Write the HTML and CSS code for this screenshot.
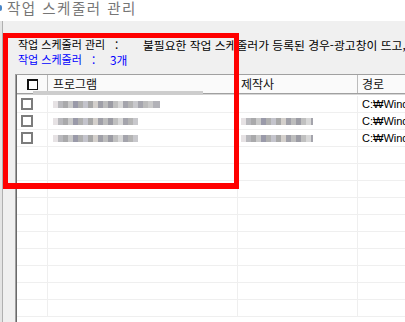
FILE: index.html
```html
<!DOCTYPE html>
<html lang="ko">
<head>
<meta charset="utf-8">
<link rel="stylesheet" href="styles.css">
</head>
<body>
<div class="window">
  <div class="titlebar"><span class="appicon"></span><span class="title">작업 스케줄러 관리</span></div>
  <div class="main">
    <div class="info">
      <div class="line"><span class="key key-long">작업 스케줄러 관리</span><span class="colon colon-long">:</span><span class="val">불필요한 작업 스케줄러가 등록된 경우-광고창이 뜨고,</span></div>
      <div class="line blue"><span class="key key-short">작업 스케줄러</span><span class="colon colon-short">:</span><span class="val">3개</span></div>
    </div>
    <div class="list">
      <div class="row head">
        <div class="cell chk"><span class="box box-head"></span></div>
        <div class="cell prog">프로그램</div>
        <div class="cell maker">제작사</div>
        <div class="cell path">경로</div>
      </div>
      <div class="body">
        <div class="row">
          <div class="cell chk"><span class="box"></span></div>
          <div class="cell prog"><span class="blur blur-a"></span></div>
          <div class="cell maker"></div>
          <div class="cell path">C:₩Windows</div>
        </div>
        <div class="row">
          <div class="cell chk"><span class="box"></span></div>
          <div class="cell prog"><span class="blur blur-b"></span></div>
          <div class="cell maker"><span class="blur blur-c"></span></div>
          <div class="cell path">C:₩Windows</div>
        </div>
        <div class="row">
          <div class="cell chk"><span class="box"></span></div>
          <div class="cell prog"><span class="blur blur-b"></span></div>
          <div class="cell maker"><span class="blur blur-c"></span></div>
          <div class="cell path">C:₩Windows</div>
        </div>
        <div class="row"><div class="cell chk"></div><div class="cell prog"></div><div class="cell maker"></div><div class="cell path"></div></div>
        <div class="row"><div class="cell chk"></div><div class="cell prog"></div><div class="cell maker"></div><div class="cell path"></div></div>
        <div class="row"><div class="cell chk"></div><div class="cell prog"></div><div class="cell maker"></div><div class="cell path"></div></div>
        <div class="row"><div class="cell chk"></div><div class="cell prog"></div><div class="cell maker"></div><div class="cell path"></div></div>
        <div class="row"><div class="cell chk"></div><div class="cell prog"></div><div class="cell maker"></div><div class="cell path"></div></div>
        <div class="row"><div class="cell chk"></div><div class="cell prog"></div><div class="cell maker"></div><div class="cell path"></div></div>
        <div class="row"><div class="cell chk"></div><div class="cell prog"></div><div class="cell maker"></div><div class="cell path"></div></div>
        <div class="row"><div class="cell chk"></div><div class="cell prog"></div><div class="cell maker"></div><div class="cell path"></div></div>
        <div class="row"><div class="cell chk"></div><div class="cell prog"></div><div class="cell maker"></div><div class="cell path"></div></div>
        <div class="row"><div class="cell chk"></div><div class="cell prog"></div><div class="cell maker"></div><div class="cell path"></div></div>
      </div>
    </div>
  </div>
  <div class="mosaic-line"></div>
  <div class="red-frame"></div>
</div>
</body>
</html>
```

FILE: styles.css
```css
* { box-sizing: border-box; }
html, body { margin: 0; padding: 0; }
body {
  width: 405px;
  height: 322px;
  overflow: hidden;
  background: #e4e4e4;
  font-family: "Noto Sans CJK KR", "Noto Sans", sans-serif;
  font-size: 12px;
  color: #000;
}
.window {
  position: relative;
  width: 405px;
  height: 322px;
  display: flex;
  flex-direction: column;
}
.titlebar {
  height: 21px;
  background: #fff;
  display: flex;
  align-items: flex-start;
  flex: none;
}
.appicon {
  width: 2px;
  height: 6px;
  margin-top: 5px;
  background: #4a86c8;
  border-radius: 0 3px 3px 0;
}
.title {
  margin-left: 5px;
  font-size: 14.5px;
  letter-spacing: 1.5px;
  line-height: 16px;
  color: #767676;
  white-space: nowrap;
}
.main {
  flex: 1;
  margin-left: 2px;
  border-left: 1px solid #b0b0b0;
  background: #f0f0f0;
  padding-top: 16px;
  display: flex;
  flex-direction: column;
  min-height: 0;
}
.info { padding-left: 15px; }
.line {
  display: flex;
  height: 15px;
  line-height: 15px;
  font-size: 11.8px;
  white-space: nowrap;
}
.line.blue { color: #0000ff; }
.key { flex: none; font-size: 11px; }
.key-long { width: 97px; }
.colon-long { width: 28px; }
.key-short { width: 74px; }
.colon-short { width: 18px; }
.colon { flex: none; }
.val { flex: none; }
.list {
  margin-top: 7px;
  margin-left: 12px;
  flex: 1;
  background: #fff;
  border-left: 1px solid #a0a0a0;
  border-top: 1px solid #a0a0a0;
  box-shadow: inset 1px 0 0 #6a6a6a;
  padding-left: 1px;
  overflow: hidden;
}
.row {
  display: grid;
  grid-template-columns: 31px 190px 120px 1fr;
  height: 17px;
  border-bottom: 1px solid #efefef;
}
.cell {
  border-right: 1px solid #efefef;
  display: flex;
  align-items: center;
  white-space: nowrap;
  overflow: hidden;
  line-height: 16px;
}
.row.head {
  height: 19px;
  background: #fafafa;
  border-bottom: 1px solid #a0a0a0;
  box-shadow: 0 1px 0 #d6d6d6;
}
.row.head .cell {
  border-right: 1px solid #bcbcbc;
  color: #111;
}
.body { padding-top: 2px; }
.prog { padding-left: 5px; }
.maker { padding-left: 3px; }
.path { padding-left: 4px; font-family: "Liberation Sans", "Noto Sans CJK KR", sans-serif; font-size: 11px; border-right: none; }
.row.head .path { font-family: "Noto Sans CJK KR", sans-serif; font-size: 12px; border-right: none; }
.box {
  display: block;
  width: 12px;
  height: 12px;
  margin-left: 4px;
  background: #fff;
  border: 2px solid #7c7c7c;
}
.box-head {
  width: 11px;
  height: 11px;
  margin-left: 10px;
  border: 1px solid #111;
  border-left-width: 2px;
  border-top-width: 2px;
}
.blur {
  display: block;
  height: 7px;
  background:
    linear-gradient(90deg,
      #e6e2e4 0 5px, #b9b9bd 5px 10px, #a9a9ab 10px 15px, #c9c9c9 15px 20px,
      #9a9aa9 20px 25px, #b0b0b0 25px 30px, #c4c4cc 30px 35px, #a8a8a8 35px 40px,
      #d4d0cc 40px 45px, #a0a0a8 45px 50px, #bdbdbd 50px 55px, #9c9ca4 55px 60px,
      #c0c0c0 60px 65px, #d8d8d8 65px 70px, #a4a4ac 70px 75px, #b4b4b4 75px 80px,
      #c8c8cc 80px 85px, #a6a6ae 85px 90px, #bcbcbc 90px 95px, #cacaca 95px 100px,
      #b2b2b8 100px 110px);
}
.blur-a { width: 107px; }
.blur-b { width: 85px; }
.blur-c { width: 72px; }
.mosaic-line {
  position: absolute;
  left: 33px;
  top: 91px;
  width: 170px;
  height: 4px;
  background: #cdcdcd;
}
.red-frame {
  position: absolute;
  left: 3px;
  top: 33px;
  width: 236px;
  height: 156px;
  border: 5px solid #ff0000;
  border-bottom-width: 6px;
}
```
